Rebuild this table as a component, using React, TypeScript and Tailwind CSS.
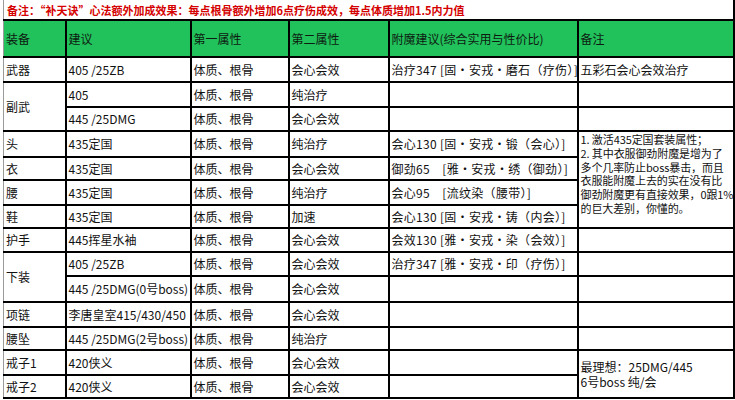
import React from "react";

const F = { fontFamily: '"Noto Sans CJK SC", "Noto Sans", sans-serif' };

type Row = {
  h: number;
  c1?: { t: string; span?: number } | null;
  c2: string;
  c3: string;
  c4: string;
  c5: string;
  c6?: { t: React.ReactNode; span?: number; top?: boolean } | null;
};

const noteLines = [
  "1. 激活435定国套装属性；",
  "2. 其中衣服御劲附魔是增为了",
  "多个几率防止boss暴击，而且",
  "衣服能附魔上去的实在没有比",
  "御劲附魔更有直接效果，0跟1%",
  "的巨大差别，你懂的。",
];

const note = (
  <div className="flex flex-col text-[11px] tracking-[-0.1px]">
    {noteLines.map((l, i) => (
      <div key={i} className="h-[13.8px] leading-[13.8px] whitespace-nowrap">
        {l}
      </div>
    ))}
  </div>
);

const ideal = (
  <div className="flex flex-col">
    <div className="h-[15px] leading-[15px]">最理想：25DMG/445</div>
    <div className="h-[15px] leading-[15px]">6号boss 纯/会</div>
  </div>
);

const rows: Row[] = [
  { h: 25, c1: { t: "武器" }, c2: "405 /25ZB", c3: "体质、根骨", c4: "会心会效", c5: "治疗347 [固・安戎・磨石（疗伤）]", c6: { t: "五彩石会心会效治疗" } },
  { h: 25, c1: { t: "副武", span: 2 }, c2: "405", c3: "体质、根骨", c4: "纯治疗", c5: "", c6: { t: "" } },
  { h: 24, c1: null, c2: "445 /25DMG", c3: "体质、根骨", c4: "会心会效", c5: "", c6: { t: "" } },
  { h: 26, c1: { t: "头" }, c2: "435定国", c3: "体质、根骨", c4: "纯治疗", c5: "会心130 [固・安戎・锻（会心）]", c6: { t: note, span: 4, top: true } },
  { h: 23, c1: { t: "衣" }, c2: "435定国", c3: "体质、根骨", c4: "会心会效", c5: "御劲65　[雅・安戎・绣（御劲）]", c6: null },
  { h: 25, c1: { t: "腰" }, c2: "435定国", c3: "体质、根骨", c4: "纯治疗", c5: "会心95　[流纹染（腰带）]", c6: null },
  { h: 23, c1: { t: "鞋" }, c2: "435定国", c3: "体质、根骨", c4: "加速", c5: "会心130 [固・安戎・铸（内会）]", c6: null },
  { h: 24, c1: { t: "护手" }, c2: "445挥星水袖", c3: "体质、根骨", c4: "会心会效", c5: "会效130 [雅・安戎・染（会效）]", c6: { t: "" } },
  { h: 24, c1: { t: "下装", span: 2 }, c2: "405 /25ZB", c3: "体质、根骨", c4: "会心会效", c5: "治疗347 [雅・安戎・印（疗伤）]", c6: { t: "" } },
  { h: 26, c1: null, c2: "445 /25DMG(0号boss)", c3: "体质、根骨", c4: "会心会效", c5: "", c6: { t: "" } },
  { h: 25, c1: { t: "项链" }, c2: "李唐皇室415/430/450", c3: "体质、根骨", c4: "会心会效", c5: "", c6: { t: "" } },
  { h: 23, c1: { t: "腰坠" }, c2: "445 /25DMG(2号boss)", c3: "体质、根骨", c4: "纯治疗", c5: "", c6: { t: "" } },
  { h: 25, c1: { t: "戒子1" }, c2: "420侠义", c3: "体质、根骨", c4: "会心会效", c5: "", c6: { t: ideal, span: 2 } },
  { h: 23, c1: { t: "戒子2" }, c2: "420侠义", c3: "体质、根骨", c4: "会心会效", c5: "", c6: null },
];

const td = "border-2 border-black px-[2px] py-0 align-middle whitespace-nowrap overflow-hidden";

export default function App() {
  return (
    <div className="w-[735px] h-[400px] bg-white overflow-hidden text-[#111]" style={F}>
      <table className="ml-[3px] table-fixed border-collapse text-[12px] leading-[16px] w-[730px]">
        <colgroup>
          <col className="w-[62px]" />
          <col className="w-[125px]" />
          <col className="w-[98px]" />
          <col className="w-[100px]" />
          <col className="w-[189px]" />
          <col className="w-[156px]" />
        </colgroup>
        <tbody>
          <tr className="h-[20px]">
            <td
              colSpan={6}
              className="border-l border-l-[#9a9a9a] border-r-2 border-r-black border-b border-b-[#333] px-[3px] py-0 align-middle whitespace-nowrap text-[11px] font-bold text-[#d40000] leading-[18px]"
            >
              备注：“补天诀”心法额外加成效果：每点根骨额外增加6点疗伤成效，每点体质增加1.5内力值
            </td>
          </tr>
          <tr className="h-[37px] bg-[#21c15b] text-[12px] text-[#0d1a10]">
            <td className={`${td} border-l border-l-[#9a9a9a]`}>装备</td>
            <td className={td}>建议</td>
            <td className={td}>第一属性</td>
            <td className={td}>第二属性</td>
            <td className={td}>附魔建议(综合实用与性价比)</td>
            <td className={td}>备注</td>
          </tr>
          {rows.map((r, i) => (
            <tr key={i} style={{ height: r.h }}>
              {r.c1 && (
                <td rowSpan={r.c1.span} className={`${td} border-l border-l-[#9a9a9a]`}>
                  {r.c1.t}
                </td>
              )}
              <td className={td}>{r.c2}</td>
              <td className={td}>{r.c3}</td>
              <td className={td}>{r.c4}</td>
              <td className={`${td} tracking-[0.3px]`}>{r.c5}</td>
              {r.c6 && (
                <td
                  rowSpan={r.c6.span}
                  className={`border-2 border-black px-[2px] whitespace-nowrap overflow-hidden ${r.c6.top ? "align-top pt-[1px] pb-0" : "align-middle py-0"}`}
                >
                  {r.c6.t}
                </td>
              )}
            </tr>
          ))}
        </tbody>
      </table>
    </div>
  );
}
